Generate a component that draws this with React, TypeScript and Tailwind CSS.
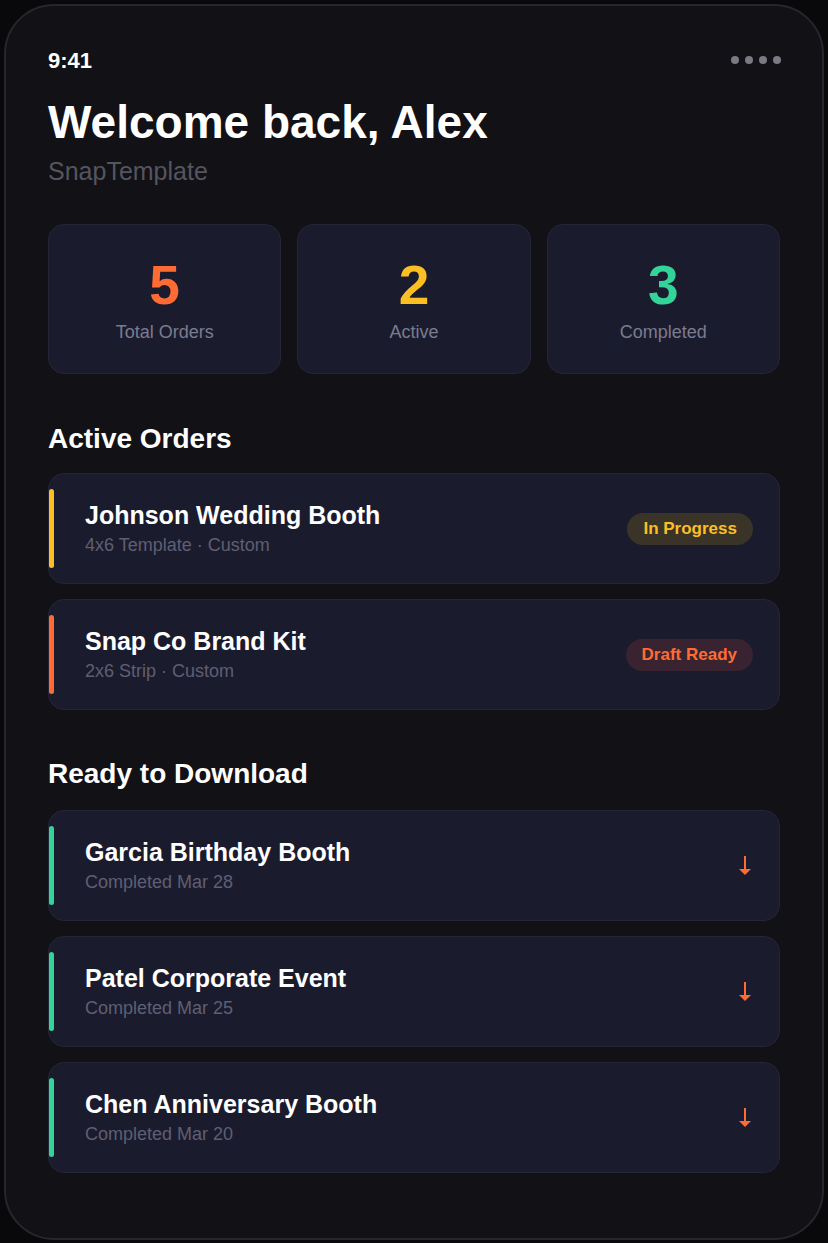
const stats = [
  { value: "5", label: "Total Orders", color: "text-[#ff6b35]" },
  { value: "2", label: "Active", color: "text-[#fbbf24]" },
  { value: "3", label: "Completed", color: "text-[#34d399]" },
];

const activeOrders = [
  {
    title: "Johnson Wedding Booth",
    sub: "4x6 Template · Custom",
    bar: "bg-[#fbbf24]",
    badge: "In Progress",
    badgeClass: "bg-[#3a3328] text-[#fbbf24]",
  },
  {
    title: "Snap Co Brand Kit",
    sub: "2x6 Strip · Custom",
    bar: "bg-[#ff6b35]",
    badge: "Draft Ready",
    badgeClass: "bg-[#3a2330] text-[#ff6b35]",
  },
];

const downloads = [
  { title: "Garcia Birthday Booth", sub: "Completed Mar 28" },
  { title: "Patel Corporate Event", sub: "Completed Mar 25" },
  { title: "Chen Anniversary Booth", sub: "Completed Mar 20" },
];

function DownloadArrow() {
  return (
    <svg width="12" height="20" viewBox="0 0 12 20" className="block">
      <rect x="5" y="0" width="2" height="14" fill="#ff6b35" />
      <polygon points="0,13 12,13 6,19" fill="#ff6b35" />
    </svg>
  );
}

function OrderCard({
  title,
  sub,
  bar,
  right,
}: {
  title: string;
  sub: string;
  bar: string;
  right: React.ReactNode;
}) {
  return (
    <div className="flex items-center h-[111px] rounded-[16px] bg-[#1b1b2e] border border-[#252538]">
      <div className={`w-[5px] self-stretch my-[15px] rounded-full ${bar}`} />
      <div className="flex-1 pl-[31px] pb-[2px]">
        <div className="text-[25px] font-bold text-white leading-[30px]">{title}</div>
        <div className="text-[18px] text-[#5f5f72] leading-[22px] mt-[4px]">{sub}</div>
      </div>
      <div className="pr-[26px]">{right}</div>
    </div>
  );
}

export default function App() {
  return (
    <div className="min-h-screen bg-[#09090b] p-[4px] font-['Liberation_Sans',Arial,sans-serif]">
      <div className="h-[1236px] rounded-[50px] border-2 border-[#26262c] bg-[#111116] px-[42px] pt-[42px]">
        {/* Status bar */}
        <div className="flex items-center justify-between">
          <span className="text-[22px] font-bold text-white leading-[26px]">9:41</span>
          <div className="flex gap-[6px] mr-[-1px] mt-[-2px]">
            <span className="w-[8px] h-[8px] rounded-full bg-[#7a7a84]" />
            <span className="w-[8px] h-[8px] rounded-full bg-[#7a7a84]" />
            <span className="w-[8px] h-[8px] rounded-full bg-[#7a7a84]" />
            <span className="w-[8px] h-[8px] rounded-full bg-[#7a7a84]" />
          </div>
        </div>

        <h1 className="mt-[22px] text-[46px] font-bold text-white leading-[52px]">Welcome back, Alex</h1>
        <div className="mt-[8px] text-[25px] text-[#55555f] leading-[30px]">SnapTemplate</div>

        {/* Stats */}
        <div className="mt-[38px] grid grid-cols-3 gap-[16px]">
          {stats.map((s) => (
            <div
              key={s.label}
              className="h-[150px] rounded-[16px] bg-[#1b1b2e] border border-[#252538] flex flex-col items-center justify-center"
            >
              <div className={`text-[55px] font-bold leading-[60px] ${s.color}`}>{s.value}</div>
              <div className="text-[18px] text-[#7b7b8e] leading-[22px] mt-[6px]">{s.label}</div>
            </div>
          ))}
        </div>

        {/* Active Orders */}
        <h2 className="mt-[48px] text-[28px] font-bold text-white leading-[34px]">Active Orders</h2>
        <div className="mt-[17px] flex flex-col gap-[15px]">
          {activeOrders.map((o) => (
            <OrderCard
              key={o.title}
              title={o.title}
              sub={o.sub}
              bar={o.bar}
              right={
                <span className={`inline-block rounded-full px-[16px] py-[6px] text-[17px] font-bold leading-[20px] ${o.badgeClass}`}>
                  {o.badge}
                </span>
              }
            />
          ))}
        </div>

        {/* Ready to Download */}
        <h2 className="mt-[47px] text-[28px] font-bold text-white leading-[34px]">Ready to Download</h2>
        <div className="mt-[19px] flex flex-col gap-[15px]">
          {downloads.map((d) => (
            <OrderCard
              key={d.title}
              title={d.title}
              sub={d.sub}
              bar="bg-[#34d399]"
              right={
                <div className="mr-[2px]">
                  <DownloadArrow />
                </div>
              }
            />
          ))}
        </div>
      </div>
    </div>
  );
}
